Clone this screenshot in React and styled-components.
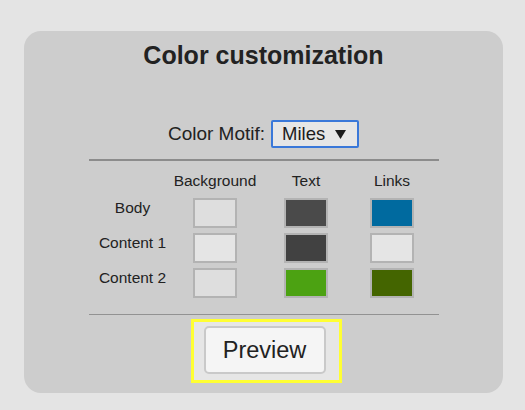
import { Fragment } from "react";
import styled, { createGlobalStyle } from "styled-components";

const GlobalStyle = createGlobalStyle`
  html, body {
    margin: 0;
    padding: 0;
    background-color: #e4e4e4;
    font-family: "Liberation Sans", Arial, sans-serif;
    color: #222;
  }
`;

const Panel = styled.div`
  margin: 31px 0 0 24px;
  width: 479px;
  box-sizing: border-box;
  padding: 10px 0 10px;
  background-color: #cdcdcd;
  border-radius: 17px;
  display: flex;
  flex-direction: column;
  align-items: center;
`;

const Title = styled.h2`
  margin: 0;
  font-size: 25px;
  line-height: 29px;
  font-weight: bold;
  color: #222;
`;

const MotifRow = styled.div`
  margin-top: 50px;
  display: flex;
  align-items: center;
  gap: 6px;
  font-size: 19px;
`;

const FakeSelect = styled.div`
  box-sizing: border-box;
  height: 28px;
  width: 88px;
  display: flex;
  align-items: center;
  justify-content: space-between;
  padding: 0 11px 0 9px;
  background-color: #e6e6e6;
  border: 2px solid #3a78d9;
  border-radius: 2px;
  font-size: 18.5px;
  color: #1b1b1b;
`;

const Rule = styled.hr`
  margin: ${(p) => p.$top}px 0 0;
  width: 350px;
  border: none;
  height: ${(p) => p.$thick}px;
  background-color: ${(p) => p.$color};
`;

const Grid = styled.div`
  margin-top: 11px;
  display: grid;
  grid-template-columns: 75px 90px 92px 80px;
  row-gap: 5px;
  font-size: 15.5px;
  line-height: 18px;
`;

const Head = styled.div`
  text-align: center;
  height: 21px;
`;

const RowLabel = styled.div`
  text-align: center;
  padding-top: 1px;
`;

const Cell = styled.div`
  display: flex;
  justify-content: center;
`;

const Swatch = styled.div`
  box-sizing: border-box;
  width: 44px;
  height: 30px;
  border: 2px solid #b3b3b3;
  background-color: ${(p) => p.$color};
`;

const Highlight = styled.div`
  margin: 4px 0 0 5px;
  border: 3px solid #ffff33;
  background-color: #e6e6e6;
  padding: 4px 13px 6px 10px;
`;

const PreviewButton = styled.button`
  box-sizing: border-box;
  width: 122px;
  height: 48px;
  background-color: #f5f5f5;
  border: 2px solid #c9c9c9;
  border-radius: 5px;
  font-family: "Liberation Sans", Arial, sans-serif;
  font-size: 23.5px;
  color: #222;
  padding: 0;
  display: block;
`;

const rows = [
  { name: "Body", colors: ["#dedede", "#4a4a4a", "#006a9f"] },
  { name: "Content 1", colors: ["#e5e5e5", "#414141", "#e5e5e5"] },
  { name: "Content 2", colors: ["#dedede", "#4ca212", "#446500"] },
];

export default function App() {
  return (
    <>
      <GlobalStyle />
      <Panel>
        <Title>Color customization</Title>

        <MotifRow>
          <span>Color Motif:</span>
          <FakeSelect>
            <span>Miles</span>
            <svg width="11" height="9" viewBox="0 0 11 9">
              <polygon points="0,0 11,0 5.5,9" fill="#1b1b1b" />
            </svg>
          </FakeSelect>
        </MotifRow>

        <Rule $top={11} $thick={2} $color="#8c8c8c" />

        <Grid>
          <Head />
          <Head>Background</Head>
          <Head>Text</Head>
          <Head>Links</Head>
          {rows.map((r) => (
            <Fragment key={r.name}>
              <RowLabel>{r.name}</RowLabel>
              {r.colors.map((c, i) => (
                <Cell key={i}>
                  <Swatch $color={c} />
                </Cell>
              ))}
            </Fragment>
          ))}
        </Grid>

        <Rule $top={16} $thick={1} $color="#929292" />

        <Highlight>
          <PreviewButton>Preview</PreviewButton>
        </Highlight>
      </Panel>
    </>
  );
}
